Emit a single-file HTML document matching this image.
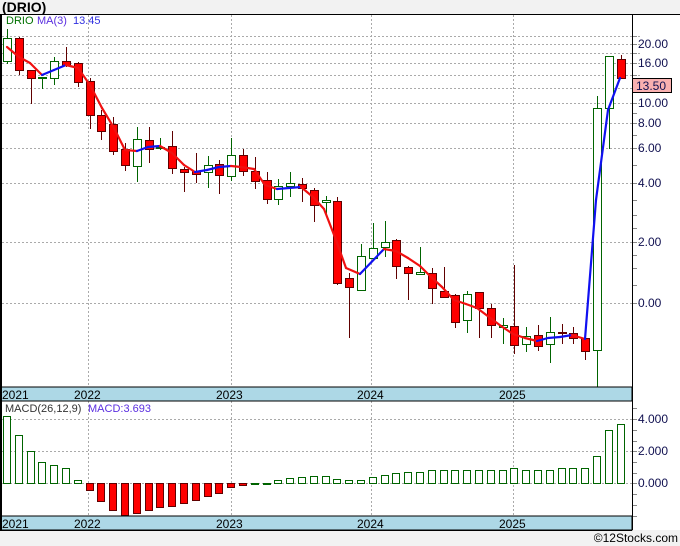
<!DOCTYPE html>
<html><head><meta charset="utf-8"><style>
html,body{margin:0;padding:0;background:#f2f2f2;}
svg{display:block;font-family:"Liberation Sans",sans-serif;}
</style></head><body>
<svg id="s" width="680" height="546" viewBox="0 0 680 546" xmlns="http://www.w3.org/2000/svg">
<rect x="0" y="0" width="680" height="546" fill="#f2f2f2"/>
<rect x="0" y="14" width="680" height="516" fill="#fff"/>
<text x="2" y="12" font-size="14" font-weight="bold" fill="#000">(DRIO)</text>
<g id="grid" stroke="#aaa" stroke-width="1" stroke-dasharray="2,2" fill="none"></g>
<g id="candles"></g>
<g id="ma" fill="none" stroke-width="2.2" stroke-linecap="round"></g>
<g id="macd"></g>
<rect x="0" y="387" width="632" height="14" fill="#add8e6" stroke="#000" stroke-width="1"/>
<rect x="0" y="516" width="632" height="14" fill="#add8e6" stroke="#000" stroke-width="1"/>
<g font-size="12" fill="#000">
<text x="2" y="399">2021</text><text x="74" y="399">2022</text><text x="216" y="399">2023</text><text x="357" y="399">2024</text><text x="499" y="399">2025</text>
<text x="2" y="528">2021</text><text x="74" y="528">2022</text><text x="216" y="528">2023</text><text x="357" y="528">2024</text><text x="499" y="528">2025</text>
</g>
<line x1="0" y1="14.5" x2="680" y2="14.5" stroke="#000"/>
<line x1="1" y1="14" x2="1" y2="530" stroke="#000" stroke-width="2"/>
<line x1="632.5" y1="14" x2="632.5" y2="530" stroke="#000"/>
<line x1="0" y1="530.5" x2="632" y2="530.5" stroke="#000"/>
<g font-size="11">
<text x="6" y="24" fill="#007000">DRIO</text>
<text x="37" y="24" fill="#5a2ee0">MA(3)</text>
<text x="73" y="24" fill="#3030e0">13.45</text>
<text x="5" y="412" fill="#333">MACD(26,12,9)</text>
<text x="88" y="412" fill="#5a2ee0">MACD:3.693</text>
</g>
<g font-size="12" fill="#101050" id="ylab">
<text x="638" y="48">20.00</text><text x="638" y="67">16.00</text>
<text x="638" y="107">10.00</text><text x="638" y="127">8.00</text>
<text x="638" y="152">6.00</text><text x="638" y="187">4.00</text>
<text x="638" y="246">2.00</text><text x="638" y="307">0.00</text>
<text x="638" y="423">4.000</text><text x="638" y="455">2.000</text><text x="638" y="487">0.000</text>
</g>
<rect x="632.5" y="78.5" width="39" height="14" fill="#f9b0b0" stroke="#000"/>
<text x="636" y="90" font-size="12" fill="#101050">13.50</text>
<text x="678" y="542" font-size="12" fill="#000" text-anchor="end">©12Stocks.com</text>
</svg>
<script>
var NS="http://www.w3.org/2000/svg";
function el(p,t,a){var e=document.createElementNS(NS,t);for(var k in a)e.setAttribute(k,a[k]);document.getElementById(p).appendChild(e);return e;}
[36,44,53,63,75,88,103,123,148,183,242,303].forEach(function(y){el("grid","line",{x1:2,y1:y+.5,x2:640,y2:y+.5});});
[419,451,483].forEach(function(y){el("grid","line",{x1:2,y1:y+.5,x2:640,y2:y+.5});});
[88,231,371,513].forEach(function(x){el("grid","line",{x1:x+.5,y1:15,x2:x+.5,y2:387});el("grid","line",{x1:x+.5,y1:401,x2:x+.5,y2:516});});
[36,44,53,63,75,88,103,113,123,135,148,165,183,200,215,228,242,255,268,285,303].forEach(function(y){el("grid","line",{x1:632,y1:y+.5,x2:637,y2:y+.5,"stroke-dasharray":"none",stroke:"#888"});});
[408,419,430,441,451,462,473,483,494,505,516].forEach(function(y){el("grid","line",{x1:632,y1:y+.5,x2:637,y2:y+.5,"stroke-dasharray":"none",stroke:"#888"});});
var C=[[38,61,29,64,1],[38,70,37,75,0],[70,78,70,104,0],[77,77,77,89,1],[61,78,57,85,1],[61,65,47,67,0],[63,82,62,87,0],[81,115,78,129,0],[115,131,110,140,0],[124,151,117,155,0],[149,165,143,171,0],[139,166,127,182,1],[140,149,127,163,0],[147,147,138,150,1],[146,168,131,174,0],[169,172,167,192,0],[171,174,153,183,0],[165,172,156,188,1],[164,175,160,194,0],[155,176,138,181,1],[155,171,149,176,0],[171,181,157,189,0],[180,199,172,204,0],[186,199,179,205,1],[183,186,172,197,1],[184,188,178,202,0],[190,205,188,222,0],[200,202,196,215,1],[201,283,197,285,0],[278,287,273,338,0],[256,290,244,290,1],[248,258,223,258,1],[242,247,221,257,1],[240,266,239,279,0],[267,273,266,300,0],[272,274,247,274,1],[273,288,268,304,0],[291,297,267,298,0],[295,322,294,328,0],[294,320,291,333,1],[292,308,292,338,0],[308,325,304,338,0],[325,327,318,344,1],[326,345,265,354,0],[336,344,327,352,1],[335,346,325,351,0],[332,344,317,363,1],[332,333,324,344,0],[333,338,327,344,0],[338,351,330,360,0],[108,350,96,387,1],[56,108,56,149,1],[59,78,55,78,0]];
C.forEach(function(c,i){var x=Math.round(7+11.8*i);var col=c[4]?"#006400":"#600000";
el("candles","line",{x1:x+.5,y1:c[2],x2:x+.5,y2:c[3],stroke:col,"stroke-width":1});
el("candles","rect",{x:x-3.5,y:c[0]+.5,width:8,height:Math.max(c[1]-c[0],1),fill:c[4]?"#fff":"#f00",stroke:col,"stroke-width":1});});
var M=[[7,47],[19,57],[30,63],[42,75],[54,70],[66,65],[78,68],[90,85],[102,108],[114,128],[125,150],[137,151],[148,147],[160,146],[172,153],[184,165],[195,172],[207,170],[219,167],[231,166],[241,167],[254,169],[265,185],[277,189],[289,188],[301,187],[313,197],[324,209],[336,240],[346,268],[360,274],[384,249],[396,251],[408,258],[420,266],[431,277],[442,287],[454,300],[466,304],[477,308],[489,317],[501,326],[513,334],[525,338],[537,341],[548,338],[560,337],[572,335],[585,339],[596,200],[608,110],[620,78]];
for(var i=1;i<M.length;i++){el("ma","line",{x1:M[i-1][0],y1:M[i-1][1],x2:M[i][0],y2:M[i][1],stroke:M[i][1]<=M[i-1][1]?"#1010f0":"#f01010"});}
var B=[416,435,451,462,465,468,480,490,501,510,515,513,510,507,506,503,500,496,493,487,485,483,483,480,478,477,476,476,479,480,480,477,475,473,472,472,470,470,470,470,470,470,470,468,470,470,470,468,468,468,466,456,430,424];
B=B.slice(0,49).concat([468,456,430,424]);
B.forEach(function(v,i){if(i>=C.length)return;var x=Math.round(7+11.8*i);
var pos=v<=483;var y=pos?v:483,h=Math.max(Math.abs(v-483),1);
el("macd","rect",{x:x-3.5,y:y+.5,width:7,height:h,fill:pos?"#fff":"#f00",stroke:pos?"#006400":"#600000","stroke-width":1});});
</script>
</body></html>
